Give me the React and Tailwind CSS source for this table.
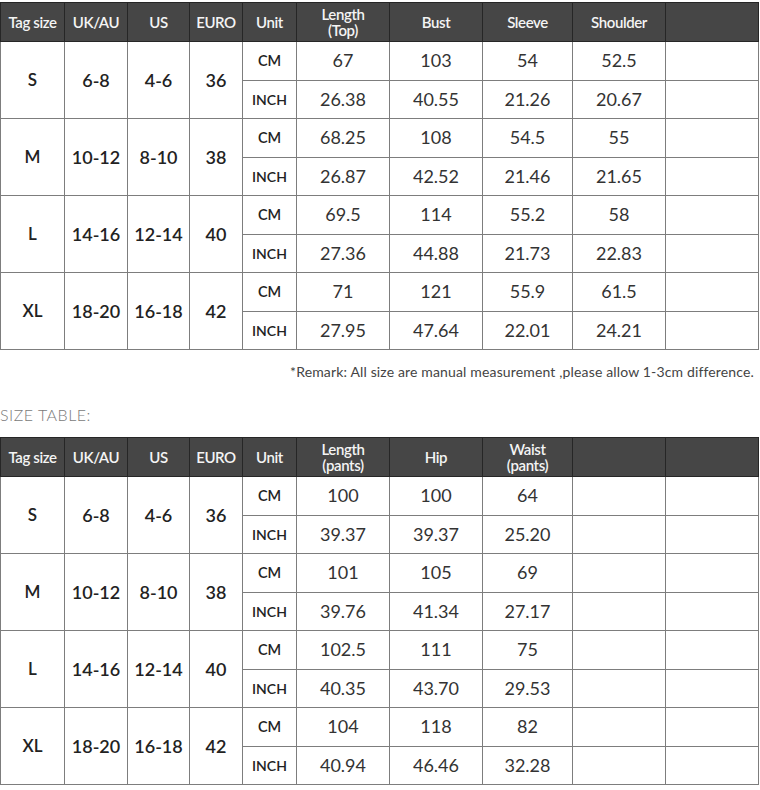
import React from 'react';

const cols = [64, 63, 62, 53, 54, 93, 93, 90, 93, 93];

const topHead = ['Tag size', 'UK/AU', 'US', 'EURO', 'Unit', ['Length', '(Top)'], 'Bust', 'Sleeve', 'Shoulder', ''];
const topRows = [
  { tag: 'S', uk: '6-8', us: '4-6', eu: '36', cm: ['67', '103', '54', '52.5', ''], inch: ['26.38', '40.55', '21.26', '20.67', ''] },
  { tag: 'M', uk: '10-12', us: '8-10', eu: '38', cm: ['68.25', '108', '54.5', '55', ''], inch: ['26.87', '42.52', '21.46', '21.65', ''] },
  { tag: 'L', uk: '14-16', us: '12-14', eu: '40', cm: ['69.5', '114', '55.2', '58', ''], inch: ['27.36', '44.88', '21.73', '22.83', ''] },
  { tag: 'XL', uk: '18-20', us: '16-18', eu: '42', cm: ['71', '121', '55.9', '61.5', ''], inch: ['27.95', '47.64', '22.01', '24.21', ''] },
];

const bottomHead = ['Tag size', 'UK/AU', 'US', 'EURO', 'Unit', ['Length', '(pants)'], 'Hip', ['Waist', '(pants)'], '', ''];
const bottomRows = [
  { tag: 'S', uk: '6-8', us: '4-6', eu: '36', cm: ['100', '100', '64', '', ''], inch: ['39.37', '39.37', '25.20', '', ''] },
  { tag: 'M', uk: '10-12', us: '8-10', eu: '38', cm: ['101', '105', '69', '', ''], inch: ['39.76', '41.34', '27.17', '', ''] },
  { tag: 'L', uk: '14-16', us: '12-14', eu: '40', cm: ['102.5', '111', '75', '', ''], inch: ['40.35', '43.70', '29.53', '', ''] },
  { tag: 'XL', uk: '18-20', us: '16-18', eu: '42', cm: ['104', '118', '82', '', ''], inch: ['40.94', '46.46', '32.28', '', ''] },
];

function SizeTable({ head, rows }) {
  return (
    <table className="table-fixed border-collapse w-[758px] text-center">
      <colgroup>
        {cols.map((w, i) => (
          <col key={i} style={{ width: w }} />
        ))}
      </colgroup>
      <thead>
        <tr className="bg-[#464646] text-[#f4f4f4]">
          {head.map((h, i) => (
            <th
              key={i}
              className="h-[39px] p-0 border border-[#262626] border-l-0 first:border-l font-semibold text-[15px] tracking-[-0.4px] align-middle"
            >
              {Array.isArray(h) ? (
                <div className="flex flex-col items-center leading-[16px]">
                  <span>{h[0]}</span>
                  <span>{h[1]}</span>
                </div>
              ) : (
                h
              )}
            </th>
          ))}
        </tr>
      </thead>
      <tbody className="text-[#222]">
        {rows.map((r) => (
          <React.Fragment key={r.tag}>
            <tr>
              <td rowSpan={2} className="p-0 border border-[#7d7d7d] text-[17px] font-semibold">{r.tag}</td>
              <td rowSpan={2} className="p-0 border border-[#7d7d7d] text-[18px] font-semibold">{r.uk}</td>
              <td rowSpan={2} className="p-0 border border-[#7d7d7d] text-[18px] font-semibold">{r.us}</td>
              <td rowSpan={2} className="p-0 border border-[#7d7d7d] text-[18px] font-semibold">{r.eu}</td>
              <td className="h-[38.5px] p-0 border border-[#7d7d7d] text-[14.5px] font-semibold">CM</td>
              {r.cm.map((v, i) => (
                <td key={i} className="p-0 border border-[#7d7d7d] text-[18px] font-normal text-[#333]">{v}</td>
              ))}
            </tr>
            <tr>
              <td className="h-[38.5px] p-0 border border-[#7d7d7d] text-[14px] font-semibold">INCH</td>
              {r.inch.map((v, i) => (
                <td key={i} className="p-0 border border-[#7d7d7d] text-[18px] font-normal text-[#333]">{v}</td>
              ))}
            </tr>
          </React.Fragment>
        ))}
      </tbody>
    </table>
  );
}

export default function App() {
  return (
    <div className="w-[760px] h-[790px] bg-white pt-[2px] overflow-hidden" style={{ fontFamily: 'Lato, "Open Sans", sans-serif' }}>
      <SizeTable head={topHead} rows={topRows} />
      <div className="flex justify-end pr-[6px] mt-[11px] text-[14px] text-[#444] tracking-[0.15px]">
        *Remark: All size are manual measurement ,please allow 1-3cm difference.
      </div>
      <div className="mt-[21px] text-[16px] text-[#7a7a7a] font-light tracking-[0.5px]">SIZE TABLE:</div>
      <div className="mt-[10px]">
        <SizeTable head={bottomHead} rows={bottomRows} />
      </div>
    </div>
  );
}
